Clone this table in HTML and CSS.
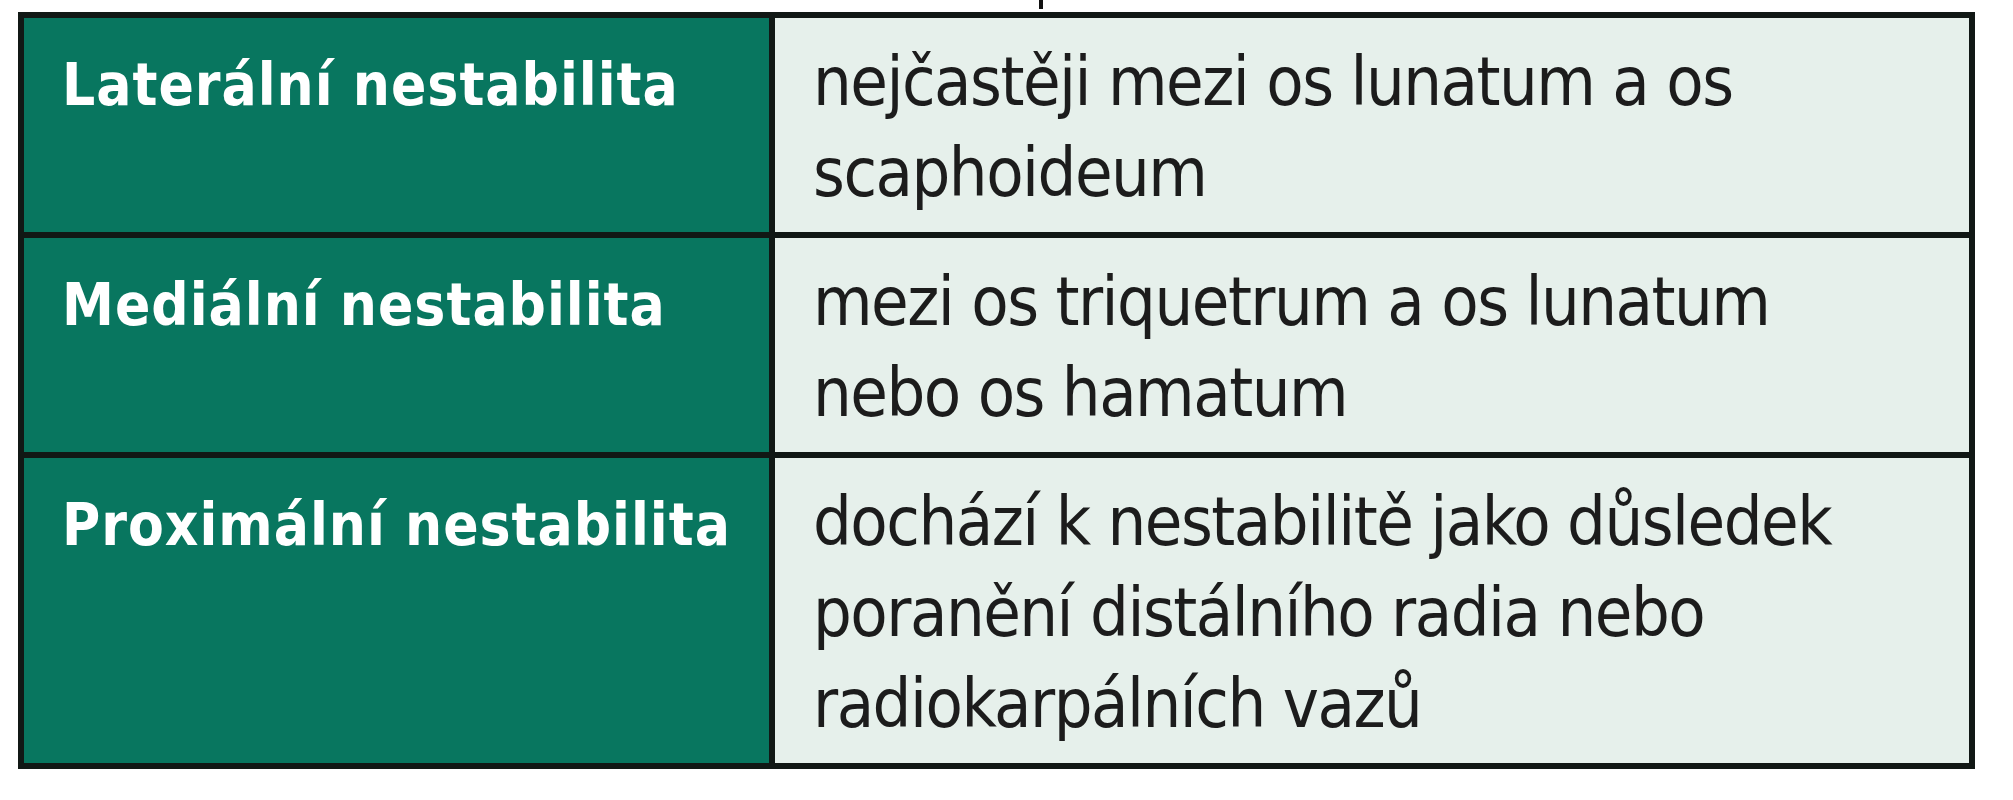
FILE: index.html
```html
<!DOCTYPE html>
<html lang="cs">
<head>
<meta charset="utf-8">
<title>Nestabilita</title>
<link rel="stylesheet" href="styles.css">
</head>
<body>
<div class="page">
  <span class="cut-mark" aria-hidden="true"></span>
  <table class="grid">
    <tr class="row-a">
      <th class="head">Laterální nestabilita</th>
      <td class="desc">nejčastěji mezi os lunatum a os<br>scaphoideum</td>
    </tr>
    <tr class="row-a">
      <th class="head">Mediální nestabilita</th>
      <td class="desc">mezi os triquetrum a os lunatum<br>nebo os hamatum</td>
    </tr>
    <tr class="row-b">
      <th class="head">Proximální nestabilita</th>
      <td class="desc">dochází k nestabilitě jako důsledek<br>poranění distálního radia nebo<br>radiokarpálních vazů</td>
    </tr>
  </table>
</div>
</body>
</html>
```
FILE: styles.css
```css
html, body {
  margin: 0;
  padding: 0;
  background: #ffffff;
}

.page {
  position: relative;
  padding: 12px 0 0 18px;
}

.cut-mark {
  position: absolute;
  left: 1039px;
  top: 0;
  width: 4px;
  height: 9px;
  background: #111111;
}

.grid {
  border-collapse: separate;
  border-spacing: 0;
  border-top: 6px solid #111815;
  border-left: 6px solid #111815;
  width: 1957px;
  table-layout: fixed;
}

.grid th,
.grid td {
  border-right: 6px solid #111815;
  border-bottom: 6px solid #111815;
  vertical-align: baseline;
  text-align: left;
  padding: 18px 20px 14px 38px;
  line-height: 91px;
}

.head {
  width: 687px;
  background: #08765f;
  color: #ffffff;
  font-family: "DejaVu Sans Condensed", "DejaVu Sans", sans-serif;
  font-weight: 700;
  font-size: 58px;
  letter-spacing: 1px;
}

.desc {
  background: #e6f0eb;
  color: #1c1c1c;
  padding-left: 32px;
  font-family: "DejaVu Sans Condensed", "DejaVu Sans", sans-serif;
  font-weight: 400;
  font-size: 68px;
  letter-spacing: -1.5px;
}
```
